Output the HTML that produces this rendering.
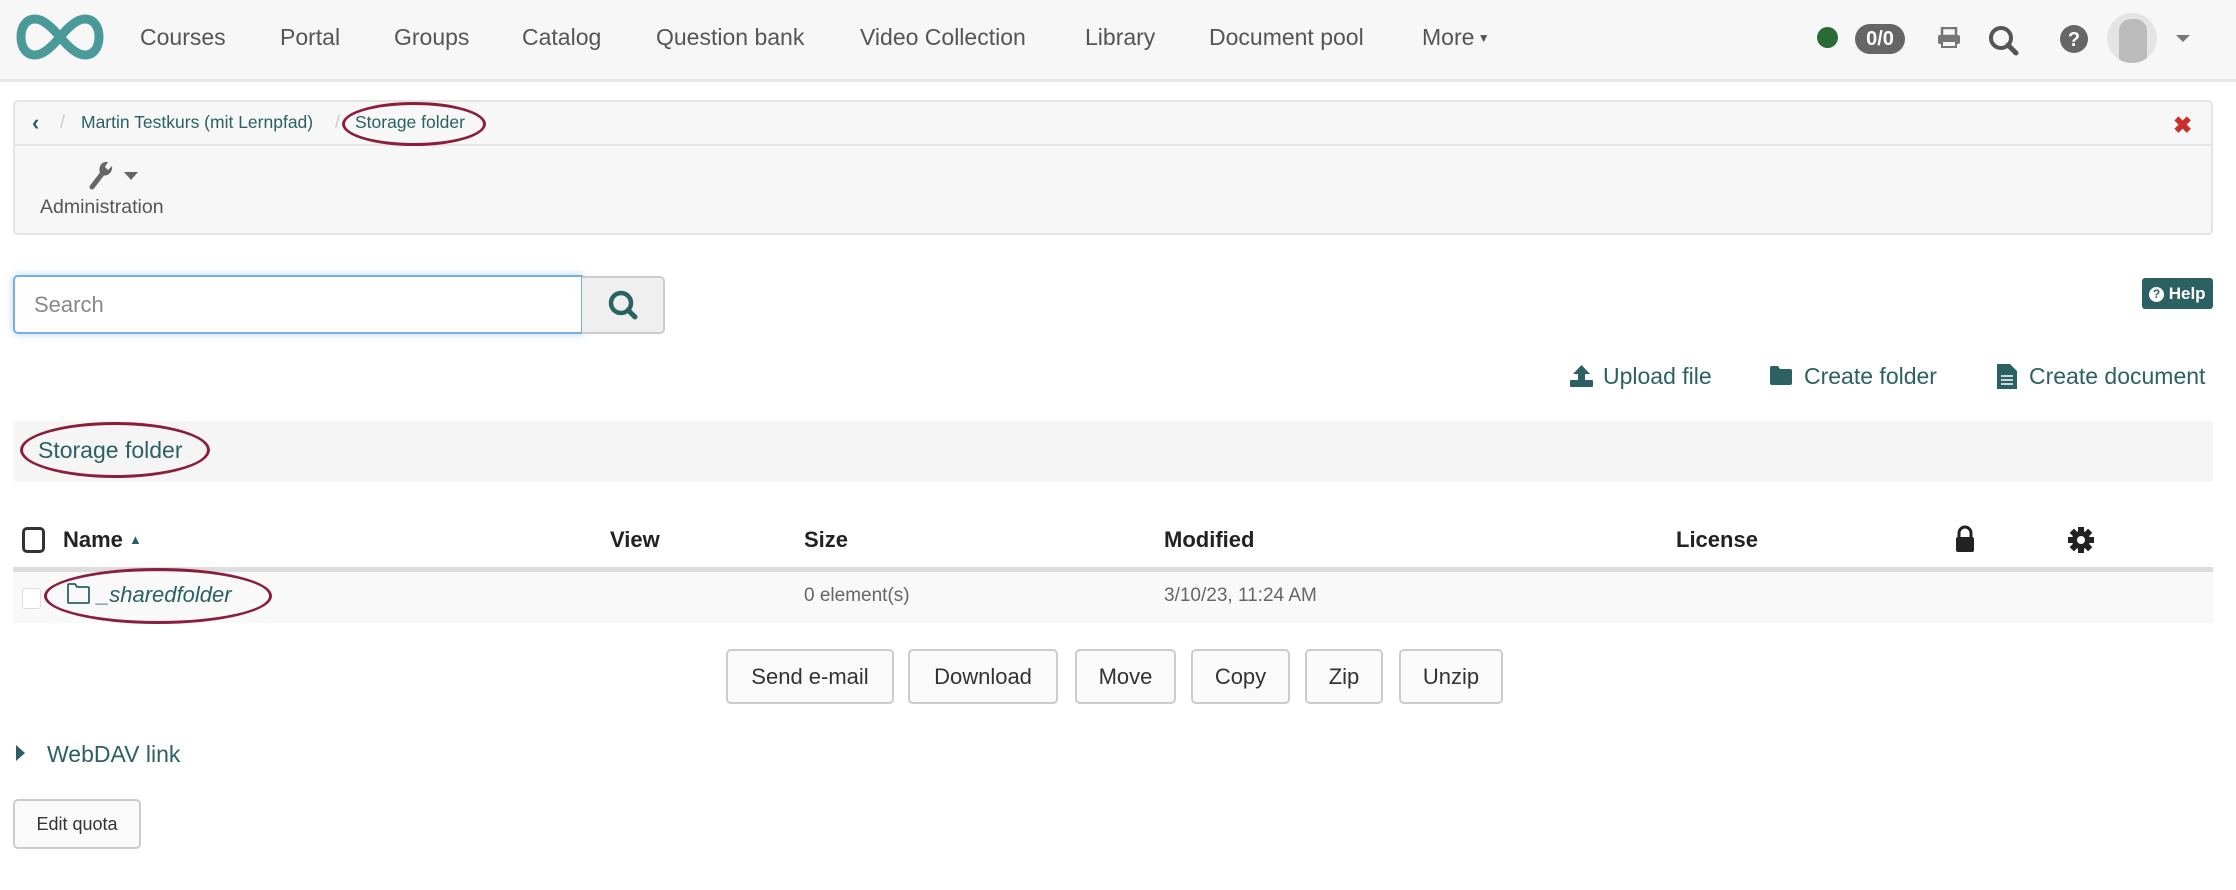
<!DOCTYPE html>
<html><head><meta charset="utf-8"><style>
*{box-sizing:border-box;margin:0;padding:0}
body{width:2236px;height:890px;background:#fff;font-family:"Liberation Sans",sans-serif;position:relative;overflow:hidden;color:#333}
.a{position:absolute;white-space:nowrap}
.nav{position:absolute;left:0;top:0;width:2236px;height:82px;background:#f7f7f7;border-bottom:3px solid #e7e7e7}
.ni{position:absolute;top:24px;font-size:23px;color:#555}
.teal{color:#2b6163}
.btn{position:absolute;top:649px;height:55px;border:2px solid #ccc;border-radius:5px;background:#fafafa;font-size:22px;color:#333;display:flex;align-items:center;justify-content:center}
.th{position:absolute;top:527px;font-size:22px;font-weight:bold;color:#222}
.ell{position:absolute;border:3px solid #8a1e3c;border-radius:50%}
</style></head><body>
<div class="nav">
 <svg class="a" style="left:16px;top:14px" width="88" height="46" viewBox="0 0 88 46"><path d="M44 23 C34 11 26 5 19 5 C10 5 5 13 5 23 C5 33 10 41 19 41 C26 41 34 35 44 23 C54 11 62 5 69 5 C78 5 83 13 83 23 C83 33 78 41 69 41 C62 41 54 35 44 23Z" fill="none" stroke="#4a9a9a" stroke-width="9"/></svg>
 <div class="ni" style="left:140px">Courses</div>
 <div class="ni" style="left:280px">Portal</div>
 <div class="ni" style="left:394px">Groups</div>
 <div class="ni" style="left:522px">Catalog</div>
 <div class="ni" style="left:656px">Question bank</div>
 <div class="ni" style="left:860px">Video Collection</div>
 <div class="ni" style="left:1085px">Library</div>
 <div class="ni" style="left:1209px">Document pool</div>
 <div class="ni" style="left:1422px">More<span style="font-size:12px;vertical-align:3px"> ▼</span></div>
 <div class="a" style="left:1817px;top:27px;width:21px;height:21px;border-radius:50%;background:#2a6a35"></div>
 <div class="a" style="left:1855px;top:24px;width:50px;height:30px;border-radius:15px;background:#666;color:#fff;font-weight:bold;font-size:20px;text-align:center;line-height:30px">0/0</div>
 <svg class="a" style="left:1937px;top:27px" width="24" height="22" viewBox="0 0 24 22"><rect x="5" y="1" width="14" height="8" fill="none" stroke="#777" stroke-width="2.5"/><rect x="1" y="8" width="22" height="9" rx="2" fill="#777"/><rect x="5" y="14" width="14" height="6" fill="#f7f7f7" stroke="#777" stroke-width="2"/></svg>
 <svg class="a" style="left:1988px;top:25px" width="32" height="32" viewBox="0 0 32 32"><circle cx="13" cy="13" r="10" fill="none" stroke="#555" stroke-width="4"/><path d="M20 20 L28 28" stroke="#555" stroke-width="5" stroke-linecap="round"/></svg>
 <svg class="a" style="left:2060px;top:25px" width="28" height="28" viewBox="0 0 28 28"><circle cx="14" cy="14" r="14" fill="#666"/><text x="14" y="21" font-size="20" font-weight="bold" fill="#fff" text-anchor="middle" font-family="Liberation Sans">?</text></svg>
 <div class="a" style="left:2107px;top:13px;width:50px;height:50px;border-radius:50%;background:#e4e4e4;overflow:hidden"><div style="position:absolute;left:12px;top:6px;width:28px;height:44px;background:#bbb;border-radius:12px 12px 4px 4px"></div></div>
 <div class="a" style="left:2176px;top:35px;width:0;height:0;border-left:7px solid transparent;border-right:7px solid transparent;border-top:7px solid #777"></div>
</div>

<div class="a" style="left:13px;top:100px;width:2200px;height:135px;background:#f7f7f7;border:2px solid #e5e5e5;border-radius:5px"></div>
<div class="a" style="left:15px;top:144px;width:2196px;height:2px;background:#e5e5e5"></div>
<div class="a teal" style="left:32px;top:110px;font-size:22px;font-weight:bold">‹</div>
<div class="a" style="left:60px;top:112px;font-size:18px;color:#ccc">/</div>
<div class="a teal" style="left:81px;top:112px;font-size:17.5px">Martin Testkurs (mit Lernpfad)</div>
<div class="a" style="left:335px;top:112px;font-size:18px;color:#ccc">/</div>
<div class="a teal" style="left:355px;top:112px;font-size:17.5px">Storage folder</div>
<div class="ell" style="left:342px;top:102px;width:144px;height:44px"></div>
<div class="a" style="left:2173px;top:112px;font-size:23px;font-weight:bold;color:#c9302c">✖</div>
<svg class="a" style="left:88px;top:160px" width="26" height="30" viewBox="0 0 26 30"><path d="M4 27 L14 14" stroke="#666" stroke-width="5" stroke-linecap="round"/><path d="M12 13 C10 6 14 1 20 2 L17 7 L20 10 L24 6 C25 13 19 17 14 15Z" fill="#666"/></svg>
<div class="a" style="left:124px;top:172px;border-left:7px solid transparent;border-right:7px solid transparent;border-top:8px solid #666"></div>
<div class="a" style="left:40px;top:196px;font-size:19.5px;color:#555">Administration</div>

<div class="a" style="left:13px;top:275px;width:570px;height:59px;border:2px solid #7aaee0;border-radius:5px 0 0 5px;box-shadow:0 0 8px rgba(102,175,233,.5);background:#fff"></div>
<div class="a" style="left:34px;top:292px;font-size:22px;color:#888">Search</div>
<div class="a" style="left:582px;top:276px;width:83px;height:58px;border:2px solid #ccc;border-left:none;border-radius:0 5px 5px 0;background:#efefef"></div>
<svg class="a" style="left:608px;top:290px" width="32" height="32" viewBox="0 0 32 32"><circle cx="13" cy="13" r="10" fill="none" stroke="#2b6163" stroke-width="4.5"/><path d="M20 20 L27 27" stroke="#2b6163" stroke-width="5" stroke-linecap="round"/></svg>

<div class="a" style="left:2142px;top:278px;width:71px;height:31px;background:#2b6163;border-radius:3px;color:#fff;font-size:17px;font-weight:bold;line-height:31px;padding-left:7px"><span style="display:inline-block;width:15px;height:15px;border-radius:50%;background:#fff;color:#2b6163;font-size:12px;text-align:center;line-height:15px;vertical-align:1px">?</span> Help</div>

<svg class="a" style="left:1570px;top:365px" width="23" height="22" viewBox="0 0 23 22"><path d="M11.5 0 L20 9 L15 9 L15 15 L8 15 L8 9 L3 9Z" fill="#2b6163"/><rect x="0" y="15" width="23" height="7" rx="1" fill="#2b6163"/></svg>
<div class="a teal" style="left:1603px;top:363px;font-size:23px">Upload file</div>
<svg class="a" style="left:1770px;top:366px" width="22" height="19" viewBox="0 0 22 19"><path d="M0 2 Q0 0 2 0 L8 0 L10 3 L20 3 Q22 3 22 5 L22 17 Q22 19 20 19 L2 19 Q0 19 0 17Z" fill="#2b6163"/></svg>
<div class="a teal" style="left:1804px;top:363px;font-size:23px">Create folder</div>
<svg class="a" style="left:1997px;top:364px" width="20" height="25" viewBox="0 0 20 25"><path d="M0 0 L13 0 L20 7 L20 25 L0 25Z" fill="#2b6163"/><path d="M4 12H16M4 16H16M4 20H16" stroke="#fff" stroke-width="1.5"/></svg>
<div class="a teal" style="left:2029px;top:363px;font-size:23px">Create document</div>

<div class="a" style="left:13px;top:421px;width:2200px;height:61px;background:#f5f5f5;border-radius:4px"></div>
<div class="a teal" style="left:38px;top:437px;font-size:23px">Storage folder</div>
<div class="ell" style="left:20px;top:422px;width:190px;height:56px"></div>

<div class="a" style="left:22px;top:527px;width:23px;height:26px;border:3px solid #333;border-radius:5px"></div>
<div class="th" style="left:63px">Name <span style="font-size:13px;color:#2b6163;vertical-align:3px">▲</span></div>
<div class="th" style="left:610px">View</div>
<div class="th" style="left:804px">Size</div>
<div class="th" style="left:1164px">Modified</div>
<div class="th" style="left:1676px">License</div>
<svg class="a" style="left:1955px;top:525px" width="20" height="28" viewBox="0 0 20 28"><path d="M4 13 V8 A6 6 0 0 1 16 8 V13" fill="none" stroke="#222" stroke-width="3"/><rect x="1" y="12" width="18" height="15" rx="2" fill="#222"/></svg>
<svg class="a" style="left:2067px;top:526px" width="28" height="28" viewBox="0 0 28 28"><g fill="#222"><circle cx="14" cy="14" r="9"/><rect x="11" y="1" width="6" height="26"/><rect x="1" y="11" width="26" height="6"/><rect x="11" y="1" width="6" height="26" transform="rotate(45 14 14)"/><rect x="11" y="1" width="6" height="26" transform="rotate(-45 14 14)"/></g><circle cx="14" cy="14" r="4" fill="#fff"/></svg>
<div class="a" style="left:13px;top:567px;width:2200px;height:5px;background:#ddd"></div>
<div class="a" style="left:13px;top:572px;width:2200px;height:51px;background:#f9f9f9"></div>
<div class="a" style="left:22px;top:588px;width:19px;height:21px;border:1px solid #ddd;border-radius:3px;background:#fff"></div>
<svg class="a" style="left:67px;top:583px" width="23" height="21" viewBox="0 0 23 21"><path d="M1 2 Q1 1 2 1 L8 1 L10 4 L21 4 Q22 4 22 5 L22 19 Q22 20 21 20 L2 20 Q1 20 1 19Z" fill="none" stroke="#2b6163" stroke-width="1.8"/></svg>
<div class="a teal" style="left:97px;top:582px;font-size:22px;font-style:italic">_sharedfolder</div>
<div class="ell" style="left:44px;top:568px;width:228px;height:56px"></div>
<div class="a" style="left:804px;top:585px;font-size:19px;color:#666">0 element(s)</div>
<div class="a" style="left:1164px;top:585px;font-size:19px;color:#666">3/10/23, 11:24 AM</div>

<div class="btn" style="left:726px;width:168px">Send e-mail</div>
<div class="btn" style="left:908px;width:150px">Download</div>
<div class="btn" style="left:1075px;width:101px">Move</div>
<div class="btn" style="left:1191px;width:99px">Copy</div>
<div class="btn" style="left:1305px;width:78px">Zip</div>
<div class="btn" style="left:1399px;width:104px">Unzip</div>

<div class="a" style="left:16px;top:745px;border-top:8px solid transparent;border-bottom:8px solid transparent;border-left:9px solid #2b6163"></div>
<div class="a teal" style="left:47px;top:741px;font-size:23px">WebDAV link</div>
<div class="btn" style="left:13px;top:799px;width:128px;height:50px;font-size:18px">Edit quota</div>
</body></html>
